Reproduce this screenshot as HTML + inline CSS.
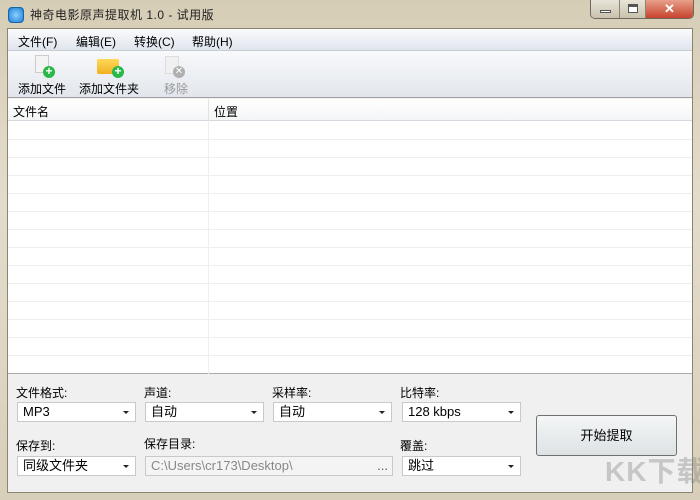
<!DOCTYPE html><html><head><meta charset="utf-8"><style>
*{box-sizing:border-box;margin:0;padding:0}
body{width:700px;height:500px;overflow:hidden;background:linear-gradient(#d6cdb6,#e4dccb 40%,#d8cfba);font-family:"Liberation Sans","Noto Sans CJK SC",sans-serif;font-size:12px;color:#000;position:relative}
.a{position:absolute;white-space:nowrap}
.title{left:30px;top:6px;font-size:12px;color:#222;letter-spacing:0.5px}
.client{left:7px;top:28px;width:686px;height:465px;background:#f0f0f0;border:1px solid #8b8470}
.menu{left:0;top:0;width:684px;height:22px;background:linear-gradient(#fafbfc,#dfe5ee);border-bottom:1px solid #c8ccd2}
.menu span{position:absolute;top:4px}
.tb{left:0;top:22px;width:684px;height:47px;background:linear-gradient(#f8f9fb,#e2e6ec);border-bottom:1px solid #a0a0a0}
.list{left:0;top:70px;width:684px;height:275px;background:#fff;border-bottom:1px solid #aaa}
.hdr{left:0;top:0;width:684px;height:22px;border-bottom:1px solid #d4d8dc;background:linear-gradient(#fff,#f4f5f6)}
.row{position:absolute;left:0;width:684px;height:1px;background:#efefef}
.lbl{position:absolute;font-size:12px}
.cb{position:absolute;height:20px;background:#fff;border:1px solid #c9c9c9;font-size:13px;line-height:17px;padding-left:5px;white-space:nowrap}
.cb:after{content:"";position:absolute;right:6px;top:8px;border:3px solid transparent;border-top:3px solid #222}
.cb.n:after{display:none}
</style></head><body>
<div class="a" style="left:8px;top:7px;width:16px;height:16px;border-radius:4px;background:radial-gradient(#8fd0ff,#1a7fd6);border:1px solid #1466aa"></div>
<div class="a title">神奇电影原声提取机 1.0 - 试用版</div>
<div class="a" style="left:590px;top:0;width:104px;height:19px;border:1px solid #6f6a5e;border-top:none;border-radius:0 0 5px 5px;overflow:hidden;display:flex">
<div style="width:29px;background:linear-gradient(#e8e4d8,#c9c1ac);border-right:1px solid #8a8474;position:relative"><div class="a" style="left:9px;top:10px;width:11px;height:3px;background:#fff;border:1px solid #555"></div></div>
<div style="width:26px;background:linear-gradient(#e8e4d8,#c9c1ac);border-right:1px solid #8a8474;position:relative"><div class="a" style="left:8px;top:4px;width:10px;height:9px;border:1px solid #555;border-top:3px solid #555;background:#fff"></div></div>
<div style="flex:1;background:linear-gradient(#e8a08a,#c7432c);color:#fff;font-weight:bold;text-align:center;font-size:13px;line-height:17px">✕</div></div>
<div class="a client">
<div class="a menu"><span style="left:10px">文件(F)</span><span style="left:68px">编辑(E)</span><span style="left:126px">转换(C)</span><span style="left:184px">帮助(H)</span></div>
<div class="a tb">
<div class="a" style="left:27px;top:4px;width:14px;height:18px;background:#f4f4f4;border:1px solid #ccc"></div>
<div class="a" style="left:35px;top:15px;width:12px;height:12px;border-radius:50%;background:#2bb84a;color:#fff;font-weight:bold;font-size:12px;line-height:11px;text-align:center">+</div>
<div class="a" style="left:10px;top:29px">添加文件</div>
<div class="a" style="left:89px;top:8px;width:22px;height:15px;background:linear-gradient(#ffd95a,#f0b020);border-radius:2px"></div>
<div class="a" style="left:104px;top:15px;width:12px;height:12px;border-radius:50%;background:#2bb84a;color:#fff;font-weight:bold;font-size:12px;line-height:11px;text-align:center">+</div>
<div class="a" style="left:71px;top:29px">添加文件夹</div>
<div class="a" style="left:157px;top:5px;width:14px;height:18px;background:#f0f0f0;border:1px solid #ddd"></div>
<div class="a" style="left:165px;top:15px;width:12px;height:12px;border-radius:50%;background:#b0b0b0;color:#fff;font-size:10px;line-height:12px;text-align:center">✕</div>
<div class="a" style="left:156px;top:29px;color:#999">移除</div>
</div>
<div class="a list">
<div class="a" style="left:200px;top:0;width:1px;height:275px;background:#eee"></div>
<div class="a hdr"><span class="a" style="left:5px;top:4px">文件名</span><span class="a" style="left:206px;top:4px">位置</span><div class="a" style="left:200px;top:0;width:1px;height:22px;background:#e2e2e2"></div></div>
<div class="row" style="top:40px"></div><div class="row" style="top:58px"></div><div class="row" style="top:76px"></div><div class="row" style="top:94px"></div><div class="row" style="top:112px"></div><div class="row" style="top:130px"></div><div class="row" style="top:148px"></div><div class="row" style="top:166px"></div><div class="row" style="top:184px"></div><div class="row" style="top:202px"></div><div class="row" style="top:220px"></div><div class="row" style="top:238px"></div><div class="row" style="top:256px"></div>
</div>
<div class="lbl" style="left:8px;top:355px">文件格式:</div>
<div class="lbl" style="left:136px;top:355px">声道:</div>
<div class="lbl" style="left:264px;top:355px">采样率:</div>
<div class="lbl" style="left:392px;top:355px">比特率:</div>
<div class="cb" style="left:9px;top:373px;width:119px">MP3</div>
<div class="cb" style="left:137px;top:373px;width:119px">自动</div>
<div class="cb" style="left:265px;top:373px;width:119px">自动</div>
<div class="cb" style="left:394px;top:373px;width:119px">128 kbps</div>
<div class="lbl" style="left:8px;top:408px">保存到:</div>
<div class="lbl" style="left:136px;top:406px">保存目录:</div>
<div class="lbl" style="left:392px;top:408px">覆盖:</div>
<div class="cb" style="left:9px;top:427px;width:119px">同级文件夹</div>
<div class="cb n" style="left:137px;top:427px;width:248px;color:#888;background:#f4f4f4">C:\Users\cr173\Desktop\<span class="a" style="right:4px;top:0;color:#555">...</span></div>
<div class="cb" style="left:394px;top:427px;width:119px">跳过</div>
<div class="a" style="left:528px;top:386px;width:141px;height:41px;border:1px solid #707070;border-radius:3px;background:linear-gradient(#f4f6f7,#dde2e4);text-align:center;line-height:39px;font-size:13px">开始提取</div>
</div>
<div class="a" style="left:605px;top:450px;font-size:28px;font-weight:bold;color:rgba(120,120,120,0.35);letter-spacing:1px">KK下载</div>
</body></html>
